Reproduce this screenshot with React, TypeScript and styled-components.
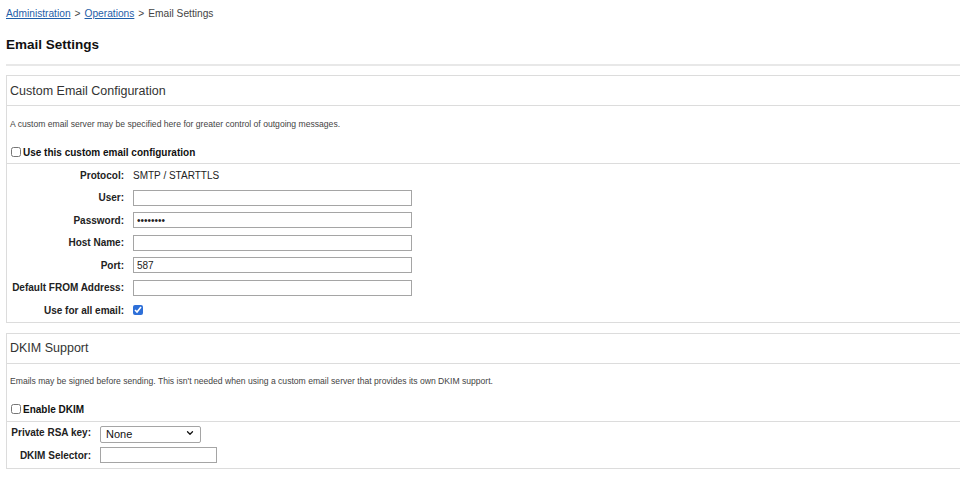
import * as React from "react";
import styled, { createGlobalStyle } from "styled-components";
import { ChevronDown } from "lucide-react";

const GlobalStyle = createGlobalStyle`
  html, body {
    margin: 0;
    padding: 0;
    background: #fff;
    overflow: hidden;
  }
  body {
    font-family: "Liberation Sans", Arial, sans-serif;
    color: #222;
  }
`;

const Page = styled.div`
  padding: 7px 0 0 6px;
  width: calc(100% + 30px);
  box-sizing: border-box;
`;

const Breadcrumb = styled.div`
  font-size: 10.2px;
  line-height: 14px;
  color: #444;
`;

const Crumb = styled.a`
  color: #1f5ea8;
  text-decoration: underline;
`;

const Sep = styled.span`
  margin: 0 4px;
`;

const Title = styled.h1`
  margin: 0;
  padding: 16px 0 11px;
  font-size: 13.5px;
  line-height: 16px;
  font-weight: bold;
  color: #111;
  border-bottom: 2px solid #e8e8e8;
`;

const Panel = styled.section<{ $gap: number }>`
  margin-top: ${(p) => p.$gap}px;
  border: 1px solid #dcdcdc;
  border-right: none;
`;

const PanelHeader = styled.div`
  height: 29px;
  padding-left: 3px;
  display: flex;
  align-items: center;
  font-size: 12.5px;
  color: #333;
  border-bottom: 1px solid #dcdcdc;
`;

const Description = styled.div<{ $height: number }>`
  height: ${(p) => p.$height}px;
  padding-left: 3px;
  display: flex;
  align-items: center;
  font-size: 8.6px;
  color: #444;
`;

const CheckRow = styled.label<{ $height: number }>`
  height: ${(p) => p.$height}px;
  padding-left: 4px;
  display: flex;
  align-items: center;
  gap: 2px;
  font-size: 10px;
  font-weight: bold;
  color: #111;
  border-bottom: 1px solid #dcdcdc;
`;

const Box = styled.input`
  width: 10px;
  height: 10px;
  margin: 0;
  accent-color: #2d6fd8;
`;

const Form = styled.div<{ $label: number; $row: number; $bottom?: number }>`
  display: grid;
  grid-template-columns: ${(p) => p.$label}px 1fr;
  grid-auto-rows: ${(p) => p.$row}px;
  column-gap: 9px;
  align-items: center;
  padding-bottom: ${(p) => p.$bottom ?? 0}px;
`;

const Label = styled.div`
  text-align: right;
  font-size: 10px;
  font-weight: bold;
  color: #222;
  white-space: nowrap;
`;

const Value = styled.div`
  font-size: 10px;
  color: #222;
`;

const Field = styled.input<{ $width: number }>`
  box-sizing: border-box;
  width: ${(p) => p.$width}px;
  height: 16px;
  margin: 0;
  padding: 0 3px;
  border: 1px solid #a5a5a5;
  border-radius: 0;
  font-family: "Liberation Sans", Arial, sans-serif;
  font-size: 10px;
  color: #222;
  outline: none;
`;

const SelectWrap = styled.div`
  position: relative;
  width: 101px;
  height: 17px;
`;

const Select = styled.select`
  appearance: none;
  box-sizing: border-box;
  width: 100%;
  height: 100%;
  margin: 0;
  padding: 0 0 0 5px;
  border: 1px solid #a5a5a5;
  border-radius: 2px;
  background: #fff;
  font-family: "Liberation Sans", Arial, sans-serif;
  font-size: 11px;
  color: #111;
`;

const Chevron = styled(ChevronDown)`
  position: absolute;
  right: 6px;
  top: 4px;
  width: 10px;
  height: 10px;
  pointer-events: none;
  color: #111;
`;

const App: React.FC = () => {
  return (
    <>
      <GlobalStyle />
      <Page>
        <Breadcrumb>
          <Crumb href="#">Administration</Crumb>
          <Sep>&gt;</Sep>
          <Crumb href="#">Operations</Crumb>
          <Sep>&gt;</Sep>
          Email Settings
        </Breadcrumb>
        <Title>Email Settings</Title>

        <Panel $gap={9}>
          <PanelHeader>Custom Email Configuration</PanelHeader>
          <Description $height={35}>
            A custom email server may be specified here for greater control of
            outgoing messages.
          </Description>
          <CheckRow $height={22}>
            <Box type="checkbox" />
            Use this custom email configuration
          </CheckRow>
          <Form $label={117} $row={22.5}>
            <Label>Protocol:</Label>
            <Value>SMTP / STARTTLS</Value>
            <Label>User:</Label>
            <Field $width={279} type="text" />
            <Label>Password:</Label>
            <Field $width={279} type="password" defaultValue="passw0rd" />
            <Label>Host Name:</Label>
            <Field $width={279} type="text" />
            <Label>Port:</Label>
            <Field $width={279} type="text" defaultValue="587" />
            <Label>Default FROM Address:</Label>
            <Field $width={279} type="text" />
            <Label>Use for all email:</Label>
            <div>
              <Box type="checkbox" defaultChecked />
            </div>
          </Form>
        </Panel>

        <Panel $gap={10}>
          <PanelHeader>DKIM Support</PanelHeader>
          <Description $height={34}>
            Emails may be signed before sending. This isn't needed when using a
            custom email server that provides its own DKIM support.
          </Description>
          <CheckRow $height={23}>
            <Box type="checkbox" />
            Enable DKIM
          </CheckRow>
          <Form $label={84} $row={22.5} $bottom={1}>
            <Label>Private RSA key:</Label>
            <SelectWrap>
              <Select defaultValue="none">
                <option value="none">None</option>
              </Select>
              <Chevron strokeWidth={3} />
            </SelectWrap>
            <Label>DKIM Selector:</Label>
            <Field $width={117} type="text" />
          </Form>
        </Panel>
      </Page>
    </>
  );
};

export default App;
